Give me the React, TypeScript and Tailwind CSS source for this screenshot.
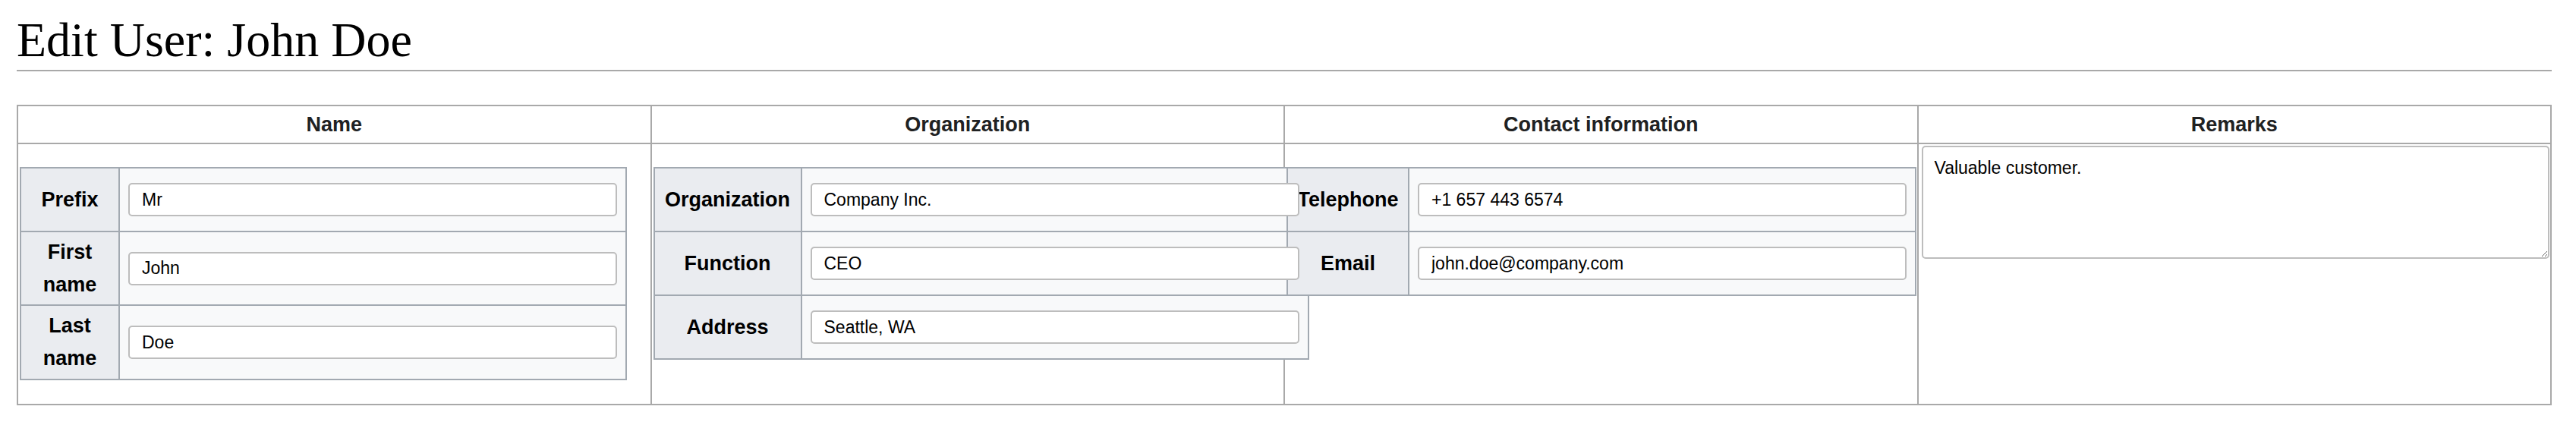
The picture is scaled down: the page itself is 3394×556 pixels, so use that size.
const nameRows = [
  { label: "Prefix", value: "Mr", h: "h-[84px]" },
  { label: "First name", value: "John", h: "h-[97px]" },
  { label: "Last name", value: "Doe", h: "h-[98px]" },
];

const orgRows = [
  { label: "Organization", value: "Company Inc.", h: "h-[84px]" },
  { label: "Function", value: "CEO", h: "h-[84px]" },
  { label: "Address", value: "Seattle, WA", h: "h-[84px]" },
];

const contactRows = [
  { label: "Telephone", value: "+1 657 443 6574", h: "h-[84px]" },
  { label: "Email", value: "john.doe@company.com", h: "h-[84px]" },
];

type Row = { label: string; value: string; h: string };

function FieldTable({ rows, width, labelWidth }: { rows: Row[]; width: string; labelWidth: string }) {
  return (
    <table className={`mt-[28px] table-fixed border-separate border-spacing-0 border-l-2 border-t-2 border-[#a2a9b1] bg-[#f8f9fa] ${width}`}>
      <tbody>
        {rows.map((r) => (
          <tr key={r.label} className={r.h}>
            <th className={`${labelWidth} border-r-2 border-b-2 border-[#a2a9b1] bg-[#eaecf0] px-[11px] text-center align-middle text-[27px] leading-[43px] font-bold text-black`}>
              {r.label}
            </th>
            <td className="border-r-2 border-b-2 border-[#a2a9b1] bg-[#f8f9fa] px-[11px] align-middle">
              {/* inputs sit above the neighbouring column's table, like the original overflow */}
              <input
                type="text"
                defaultValue={r.value}
                className="relative block h-[44px] w-[644px] rounded-[5px] border-2 border-[#bdbdbd] bg-white pl-[16px] text-[23px] text-black outline-none"
              />
            </td>
          </tr>
        ))}
      </tbody>
    </table>
  );
}

export default function App() {
  return (
    <main className="min-h-screen bg-white pl-[22px] pr-[32px] font-['Liberation_Sans',Arial,sans-serif] text-[#202122]">
      <h1 className="border-b-2 border-[#a9a9a9] pt-[21px] pb-[7px] font-['Liberation_Serif',Georgia,serif] text-[64px] leading-[64px] font-normal text-black">
        Edit User: John Doe
      </h1>

      <table className="mt-[44px] w-full table-fixed border-separate border-spacing-0 border-l-2 border-t-2 border-[#a9a9a9]">
        <thead>
          <tr>
            {["Name", "Organization", "Contact information", "Remarks"].map((h) => (
              <th key={h} className="h-[50px] border-r-2 border-b-2 border-[#a9a9a9] text-center align-middle text-[27px] font-bold text-[#202122]">
                {h}
              </th>
            ))}
          </tr>
        </thead>
        <tbody>
          <tr>
            <td className="h-[344px] border-r-2 border-b-2 border-[#a9a9a9] p-[2px] align-top">
              <FieldTable rows={nameRows} width="w-[800px]" labelWidth="w-[130px]" />
            </td>
            <td className="h-[344px] border-r-2 border-b-2 border-[#a9a9a9] p-[2px] align-top">
              <FieldTable rows={orgRows} width="w-[864px]" labelWidth="w-[194px] whitespace-nowrap" />
            </td>
            <td className="h-[344px] border-r-2 border-b-2 border-[#a9a9a9] p-[2px] align-top">
              <FieldTable rows={contactRows} width="w-[830px]" labelWidth="w-[160px] whitespace-nowrap" />
            </td>
            <td className="h-[344px] border-r-2 border-b-2 border-[#a9a9a9] p-[2px] align-top">
              <textarea
                defaultValue="Valuable customer."
                className="ml-[2px] block h-[149px] w-[827px] rounded-[5px] border-2 border-[#bdbdbd] bg-white px-[15px] pt-[10px] text-[23px] text-black outline-none"
              />
            </td>
          </tr>
        </tbody>
      </table>
    </main>
  );
}
